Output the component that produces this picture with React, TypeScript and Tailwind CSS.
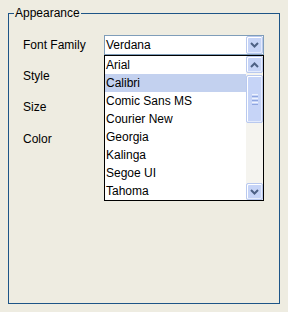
import React from "react";

const Chevron = ({ up = false }: { up?: boolean }) => (
  <svg width="9" height="6" viewBox="0 0 9 6" className="block">
    <path
      d={up ? "M1 5 L4.5 1.5 L8 5" : "M1 1 L4.5 4.5 L8 1"}
      fill="none"
      stroke="#4d6185"
      strokeWidth="2"
    />
  </svg>
);

const XpButton = ({ up = false, className = "" }: { up?: boolean; className?: string }) => (
  <div
    className={`flex items-center justify-center rounded-[2px] border border-[#b9c9ef] bg-[#c6d4f7] shadow-[inset_1px_1px_0_#ffffff,inset_-1px_-1px_0_#e4ebfc] ${className}`}
  >
    <Chevron up={up} />
  </div>
);

const fonts = [
  "Arial",
  "Calibri",
  "Comic Sans MS",
  "Courier New",
  "Georgia",
  "Kalinga",
  "Segoe UI",
  "Tahoma",
];

export default function App() {
  return (
    <div
      className="relative w-[288px] h-[312px] bg-[#eeece1] pt-[6px] pl-[8px] text-[12px] text-black"
      style={{ fontFamily: '"Liberation Sans", Arial, sans-serif' }}
    >
      <fieldset className="w-[272px] h-[298px] border border-[#1d5587] pt-[15px]">
        <legend className="ml-[5px] px-[1px] leading-[14px] text-[12px]">Appearance</legend>
        <div className="flex flex-col gap-[11px] pl-[14px]">
          <div className="flex h-[20px] items-center">
            <span className="w-[81px]">Font Family</span>
            <div className="flex h-[20px] w-[160px] items-center border border-[#7f9db9] bg-white pl-[1px]">
              <span className="flex-1">Verdana</span>
              <XpButton className="mr-[0px] h-[18px] w-[17px]" />
            </div>
          </div>
          <div className="flex h-[20px] items-center">
            <span>Style</span>
          </div>
          <div className="flex h-[20px] items-center">
            <span>Size</span>
          </div>
          <div className="flex h-[20px] items-center mt-[1px]">
            <span>Color</span>
          </div>
        </div>
      </fieldset>

      <div className="absolute left-[104px] top-[55px] flex h-[146px] w-[160px] border border-black bg-white">
        <div className="flex w-[141px] flex-col">
          {fonts.map((f) => (
            <div
              key={f}
              className={`flex h-[18px] items-center pl-[1px] ${f === "Calibri" ? "bg-[#c3d1ef]" : ""}`}
            >
              {f}
            </div>
          ))}
        </div>
        <div className="flex w-[17px] flex-col bg-[#f5f4ef]">
          <XpButton up className="h-[17px] w-[17px]" />
          <div className="mt-[2px] flex h-[48px] w-[17px] flex-col items-center justify-center gap-[1px] rounded-[2px] border border-[#b9c9ef] bg-[#c6d4f7] shadow-[inset_1px_1px_0_#ffffff,inset_-1px_-1px_0_#e4ebfc]">
            <div className="h-px w-[6px] bg-[#eef2fd]" />
            <div className="h-px w-[6px] bg-[#8fa6e0]" />
            <div className="h-px w-[6px] bg-[#eef2fd]" />
            <div className="h-px w-[6px] bg-[#8fa6e0]" />
            <div className="h-px w-[6px] bg-[#eef2fd]" />
            <div className="h-px w-[6px] bg-[#8fa6e0]" />
          </div>
          <div className="flex-1" />
          <XpButton className="h-[17px] w-[17px]" />
        </div>
      </div>
    </div>
  );
}
